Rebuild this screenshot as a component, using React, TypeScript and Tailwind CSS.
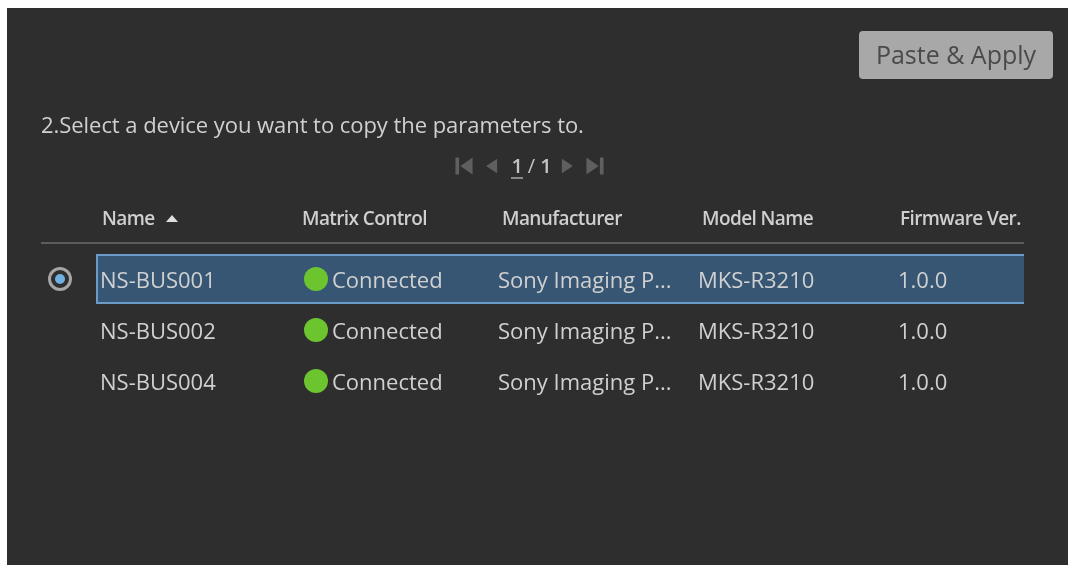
import React from 'react';

const font = { fontFamily: '"Open Sans", "Noto Sans", sans-serif' };

const devices = ['NS-BUS001', 'NS-BUS002', 'NS-BUS004'];

const PagerIcon = ({ d }: { d: string }) => (
  <svg width="22" height="20" viewBox="0 0 18 16" className="fill-[#5f5f5f]">
    <path d={d} />
  </svg>
);

const App: React.FC = () => {
  return (
    <div className="h-[567px] w-[1070px] overflow-hidden bg-white pl-[7px] pr-[2px] pt-[8px] pb-[2px]" style={font}>
      <div className="flex h-full flex-col bg-[#2e2e2e] pl-[34px] pr-[15px] pt-[23px] blur-[0.5px]">
        <div className="flex justify-end">
          <button className="flex h-[48px] w-[194px] items-center justify-center rounded-[4px] bg-[#a8a8a8] text-[25px] text-[#4a4a4a]">
            Paste &amp; Apply
          </button>
        </div>

        <div className="mt-[28px] whitespace-nowrap text-[22px] leading-[34px] tracking-[-0.05px] text-[#d0d0d0]">
          2.Select a device you want to copy the parameters to.
        </div>

        <div className="mt-[12px] flex h-[26px] w-[977px] items-center justify-center gap-[5px] text-[20px] font-semibold text-[#c4c4c4]">
          <PagerIcon d="M2 1h3v14H2zM16 1v14L6 8z" />
          <PagerIcon d="M14 2v12L5 8z" />
          <span className="ml-[4px] border-b-2 border-[#8a8a8a] leading-[23px]">1</span>
          <span className="font-normal">/</span>
          <span>1</span>
          <PagerIcon d="M4 2v12l9-6z" />
          <PagerIcon d="M2 1v14l10-7zM13 1h3v14h-3z" />
        </div>

        <div className="mt-[16px] flex h-[49px] w-[983px] items-center border-b-2 border-[#5c5c5c] text-[19px] font-semibold tracking-[-0.6px] text-[#cfcfcf]">
          <div className="flex w-[200px] items-center gap-[11px] pl-[61px]">
            Name
            <svg width="12" height="7" viewBox="0 0 12 7" className="fill-[#e0e0e0]">
              <path d="M6 0l6 7H0z" />
            </svg>
          </div>
          <div className="w-[200px] pl-[61px] whitespace-nowrap">Matrix Control</div>
          <div className="w-[200px] pl-[61px] whitespace-nowrap">Manufacturer</div>
          <div className="w-[199px] pl-[61px] whitespace-nowrap">Model Name</div>
          <div className="w-[184px] pl-[60px] whitespace-nowrap">Firmware Ver.</div>
        </div>

        <div className="mt-[10px] flex w-[983px] flex-col gap-[1px]">
          {devices.map((name, i) => (
            <div key={name} className="flex h-[50px] items-center">
              <div className="flex w-[55px] justify-start pl-[7px]">
                {i === 0 && (
                  <span className="flex h-[24px] w-[24px] items-center justify-center rounded-full border-[3px] border-[#a5a5a5]">
                    <span className="h-[10px] w-[10px] rounded-full bg-[#6fb0e0]" />
                  </span>
                )}
              </div>
              <div
                className={`flex h-full flex-1 items-center text-[22px] text-[#d0d0d0] ${
                  i === 0 ? 'border-2 border-[#6b9cc7] border-r-0 bg-[#365674]' : 'border-2 border-transparent'
                }`}
              >
                <div className="w-[206px] pl-[2px] font-medium whitespace-nowrap">{name}</div>
                <div className="flex w-[194px] items-center gap-[4px]">
                  <span className="h-[24px] w-[24px] rounded-full bg-[#6cc52f]" />
                  Connected
                </div>
                <div className="w-[200px] whitespace-nowrap">Sony Imaging P...</div>
                <div className="w-[200px] font-medium">MKS-R3210</div>
                <div>1.0.0</div>
              </div>
            </div>
          ))}
        </div>
      </div>
    </div>
  );
};

export default App;
